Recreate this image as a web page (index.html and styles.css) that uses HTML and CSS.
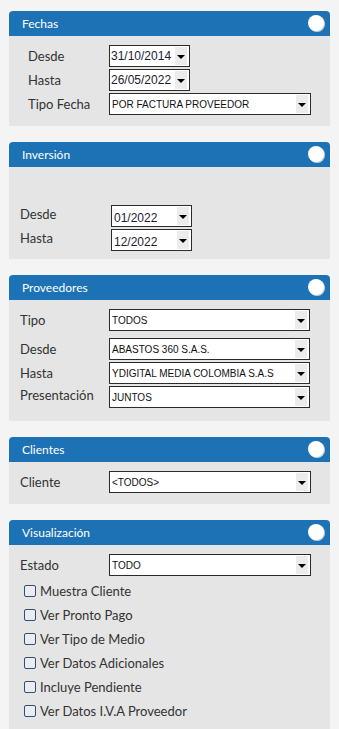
FILE: index.html
```html
<!DOCTYPE html>
<html lang="es">
<head>
    <meta charset="UTF-8">
    <meta name="viewport" content="width=device-width, initial-scale=1.0">
    <title>Filtros</title>
    <link rel="stylesheet" href="styles.css">
</head>
<body>
    <div class="panel">
        <div class="panel-head"><span>Fechas</span><i class="knob"></i></div>
        <div class="panel-body fechas">
            <div class="row"><label>Desde</label><div class="sel date"><span>31/10/2014</span><b></b></div></div>
            <div class="row"><label>Hasta</label><div class="sel date"><span>26/05/2022</span><b></b></div></div>
            <div class="row"><label>Tipo Fecha</label><div class="sel"><span>POR FACTURA PROVEEDOR</span><b></b></div></div>
        </div>
    </div>

    <div class="panel">
        <div class="panel-head"><span>Inversión</span><i class="knob"></i></div>
        <div class="panel-body inversion">
            <div class="row"><label>Desde</label><div class="sel date"><span>01/2022</span><b></b></div></div>
            <div class="row"><label>Hasta</label><div class="sel date"><span>12/2022</span><b></b></div></div>
        </div>
    </div>

    <div class="panel">
        <div class="panel-head"><span>Proveedores</span><i class="knob"></i></div>
        <div class="panel-body proveedores">
            <div class="row first"><label>Tipo</label><div class="sel"><span>TODOS</span><b></b></div></div>
            <div class="row"><label>Desde</label><div class="sel"><span>ABASTOS 360 S.A.S.</span><b></b></div></div>
            <div class="row"><label>Hasta</label><div class="sel"><span>YDIGITAL MEDIA COLOMBIA S.A.S</span><b></b></div></div>
            <div class="row"><label>Presentación</label><div class="sel"><span>JUNTOS</span><b></b></div></div>
        </div>
    </div>

    <div class="panel">
        <div class="panel-head"><span>Clientes</span><i class="knob"></i></div>
        <div class="panel-body clientes">
            <div class="row"><label>Cliente</label><div class="sel"><span>&lt;TODOS&gt;</span><b></b></div></div>
        </div>
    </div>

    <div class="panel">
        <div class="panel-head"><span>Visualización</span><i class="knob"></i></div>
        <div class="panel-body visual">
            <div class="row"><label>Estado</label><div class="sel"><span>TODO</span><b></b></div></div>
            <div class="checks">
                <div class="check"><i></i>Muestra Cliente</div>
                <div class="check"><i></i>Ver Pronto Pago</div>
                <div class="check"><i></i>Ver Tipo de Medio</div>
                <div class="check"><i></i>Ver Datos Adicionales</div>
                <div class="check"><i></i>Incluye Pendiente</div>
                <div class="check"><i></i>Ver Datos I.V.A Proveedor</div>
            </div>
        </div>
    </div>
</body>
</html>
```

FILE: styles.css
```css
*{
    margin: 0;
    padding: 0;
    box-sizing: border-box;
}

body{
    background: #f4f4f4;
    font-family: Lato, "Open Sans", sans-serif;
    color: #333;
    padding: 11px 9px 0 9px;
}

.panel{
    width: 321px;
    margin-bottom: 16px;
}

.panel-head{
    height: 25px;
    background: #1d72b5;
    border-radius: 4px 4px 0 0;
    color: #fff;
    font-size: 12px;
    display: flex;
    align-items: center;
    justify-content: space-between;
    padding: 0 6px 1px 13px;
}

.knob{
    width: 16px;
    height: 16px;
    border-radius: 50%;
    background: #fff;
    box-shadow: 1px 1px 0 #c9d3dc;
}

.panel-body{
    background: #e5e5e5;
    font-size: 13px;
}

.row{
    display: grid;
    align-items: center;
    height: 22px;
    margin-bottom: 2px;
}

.row:last-child{
    margin-bottom: 0;
}

.fechas{
    padding: 9px 0 11px 19px;
}

.fechas .row{
    grid-template-columns: 81px 202px;
}

.inversion{
    padding: 38px 0 8px 11px;
}

.inversion .row{
    grid-template-columns: 91px 81px;
}

.inversion label{
    margin-top: -5px;
}

.proveedores{
    padding: 9px 0 13px 11px;
}

.proveedores .row{
    grid-template-columns: 89px 201px;
}

.proveedores .row.first{
    margin-bottom: 7px;
}

.proveedores .row:last-child label{
    margin-top: -4px;
}

.clientes{
    padding: 9px 0 11px 11px;
}

.clientes .row{
    grid-template-columns: 89px 202px;
}

.visual{
    padding: 9px 0 12px 11px;
}

.visual .row{
    grid-template-columns: 89px 202px;
    margin-bottom: 3px;
}

.sel{
    height: 22px;
    background: #fff;
    border: 1px solid #2b2b2b;
    display: flex;
    align-items: center;
    padding: 1px 2px 1px 2px;
    font-family: "Liberation Sans", Arial, sans-serif;
    font-size: 10px;
    color: #111;
}

.sel span{
    flex: 1;
    white-space: nowrap;
    overflow: hidden;
}

.sel.date{
    width: 81px;
    padding-left: 1px;
    font-size: 12px;
    color: #1c1c30;
}

.inversion .sel.date{
    padding-left: 2px;
}

.inversion .sel span{
    margin-top: 3px;
}

.sel b{
    width: 12px;
    height: 100%;
    background: #ececec;
    position: relative;
}

.sel b::after{
    content: "";
    position: absolute;
    left: 2px;
    top: 8px;
    border-left: 4px solid transparent;
    border-right: 4px solid transparent;
    border-top: 4px solid #000;
}

.checks{
    padding-left: 4px;
}

.check{
    height: 24px;
    display: flex;
    align-items: center;
    gap: 4px;
}

.check i{
    width: 12px;
    height: 12px;
    border: 1px solid #2b4f7e;
    border-radius: 2px;
    background: #ececec;
}
```
